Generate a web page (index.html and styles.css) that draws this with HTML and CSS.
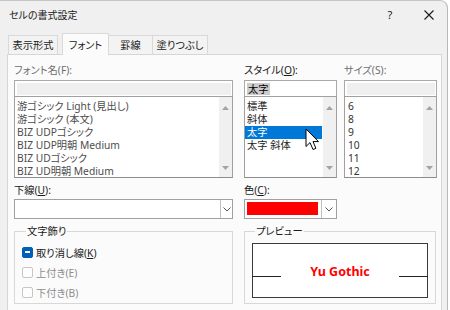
FILE: index.html
```html
<!DOCTYPE html>
<html lang="ja">
<head>
<meta charset="utf-8">
<title>セルの書式設定</title>
<link rel="stylesheet" href="styles.css">
</head>
<body>
<div class="window">
  <div class="titlebar">
    <span class="title">セルの書式設定</span>
    <span class="help">?</span>
    <svg class="close" width="10" height="10" viewBox="0 0 10 10"><path d="M0.5 0.5 L9.5 9.5 M9.5 0.5 L0.5 9.5" stroke="#1a1a1a" stroke-width="1.1" fill="none"/></svg>
  </div>
  <div class="tabs">
    <div class="tab t1">表示形式</div>
    <div class="tab active t2">フォント</div>
    <div class="tab t3">罫線</div>
    <div class="tab t4">塗りつぶし</div>
  </div>
  <div class="panel">
    <div class="top">
      <div class="col c-font">
        <div class="label dis">フォント名(F):</div>
        <div class="input"><div class="fill"></div></div>
        <div class="list">
          <div class="items font-items">
            <div class="item">游ゴシック Light (見出し)</div>
            <div class="item">游ゴシック (本文)</div>
            <div class="item">BIZ UDPゴシック</div>
            <div class="item">BIZ UDP明朝 Medium</div>
            <div class="item">BIZ UDゴシック</div>
            <div class="item">BIZ UD明朝 Medium</div>
          </div>
          <div class="scroll">
            <svg width="7" height="4" viewBox="0 0 7 4"><path d="M3.5 0 L7 4 L0 4 Z" fill="#a3a3a3"/></svg>
            <svg width="7" height="4" viewBox="0 0 7 4"><path d="M0 0 L7 0 L3.5 4 Z" fill="#a3a3a3"/></svg>
          </div>
        </div>
      </div>
      <div class="col c-style">
        <div class="label">スタイル(<u>O</u>):</div>
        <div class="input edit"><span class="sel-text">太字</span></div>
        <div class="list cursor-host">
          <div class="items">
            <div class="item">標準</div>
            <div class="item">斜体</div>
            <div class="item selected">太字</div>
            <div class="item">太字 斜体</div>
          </div>
          <div class="scroll">
            <svg width="7" height="4" viewBox="0 0 7 4"><path d="M3.5 0 L7 4 L0 4 Z" fill="#a3a3a3"/></svg>
            <svg width="7" height="4" viewBox="0 0 7 4"><path d="M0 0 L7 0 L3.5 4 Z" fill="#a3a3a3"/></svg>
          </div>
          <svg class="cursor" width="15" height="23" viewBox="0 0 15 23"><path d="M1 1 V18.5 L5 14.6 L8 21.5 L10.9 20.3 L8 13.6 H13.5 Z" fill="#fff" stroke="#000" stroke-width="1" stroke-linejoin="round"/></svg>
        </div>
      </div>
      <div class="col c-size">
        <div class="label dis">サイズ(S):</div>
        <div class="input"><div class="fill"></div></div>
        <div class="list">
          <div class="items size-items">
            <div class="item">6</div>
            <div class="item">8</div>
            <div class="item">9</div>
            <div class="item">10</div>
            <div class="item">11</div>
            <div class="item">12</div>
          </div>
          <div class="scroll">
            <svg width="7" height="4" viewBox="0 0 7 4"><path d="M3.5 0 L7 4 L0 4 Z" fill="#a3a3a3"/></svg>
            <svg width="7" height="4" viewBox="0 0 7 4"><path d="M0 0 L7 0 L3.5 4 Z" fill="#a3a3a3"/></svg>
          </div>
        </div>
      </div>
    </div>
    <div class="bottom">
      <div class="bcol left">
        <div class="label">下線(<u>U</u>):</div>
        <div class="combo wide">
          <div class="value"></div>
          <div class="drop narrow"><svg width="8" height="5" viewBox="0 0 8 5"><path d="M0.5 0.5 L4 4 L7.5 0.5" stroke="#555" stroke-width="1" fill="none"/></svg></div>
        </div>
        <fieldset class="group deco">
          <legend>文字飾り</legend>
          <div class="check"><span class="box on"></span><span>取り消し線(<u>K</u>)</span></div>
          <div class="check dis-check"><span class="box"></span><span>上付き(E)</span></div>
          <div class="check dis-check"><span class="box"></span><span>下付き(B)</span></div>
        </fieldset>
      </div>
      <div class="bcol right">
        <div class="label">色(<u>C</u>):</div>
        <div class="combo color">
          <div class="value"><div class="swatch"></div></div>
          <div class="drop"><svg width="8" height="5" viewBox="0 0 8 5"><path d="M0.5 0.5 L4 4 L7.5 0.5" stroke="#555" stroke-width="1" fill="none"/></svg></div>
        </div>
        <fieldset class="group preview">
          <legend>プレビュー</legend>
          <div class="pbox">
            <span class="pline"></span>
            <span class="ptext">Yu Gothic</span>
            <span class="pline"></span>
          </div>
        </fieldset>
      </div>
    </div>
  </div>
</div>
</body>
</html>
```

FILE: styles.css
```css
* { box-sizing: border-box; }
html, body { margin: 0; padding: 0; background: #ffffff; }
body {
  font-family: "Noto Sans", "Noto Sans CJK JP", sans-serif;
  font-size: 10.25px;
  color: #1a1a1a;
  font-feature-settings: "palt";
}
u { text-decoration: underline; text-underline-offset: 1px; }

.window {
  width: 448px;
  height: 330px;
  background: #f0f0f0;
  border-top: 1px solid #c6c6c6;
  border-right: 1px solid #b8b8b8;
  border-top-right-radius: 8px;
  overflow: hidden;
}

.titlebar {
  height: 27px;
  display: flex;
  align-items: center;
  padding-left: 9px;
}
.title { flex: 1; line-height: 14px; font-size: 10px; }
.help { width: 10px; text-align: center; font-size: 11px; margin-right: 29px; line-height: 14px; }
.close { margin-right: 13px; display: block; }

.tabs {
  height: 26px;
  display: flex;
  align-items: flex-end;
  padding-left: 8px;
}
.tab {
  height: 19px;
  border: 1px solid #d9d9d9;
  border-bottom: none;
  background: #f3f3f3;
  display: flex;
  align-items: center;
  justify-content: center;
  line-height: 14px;
}
.t1 { width: 50px; margin-right: 4px; }
.t2 { width: 47px; }
.t3 { width: 45px; margin-left: -1px; }
.t4 { width: 56px; margin-left: -1px; }
.tab.active {
  height: 22px;
  margin-bottom: -1px;
  background: #fbfbfb;
  position: relative;
  z-index: 1;
}

.panel {
  margin-left: 7px;
  width: 435px;
  height: 290px;
  background: #fbfbfb;
  border: 1px solid #d6d6d6;
  padding: 8px 4px 0 6px;
}

.top { display: flex; }
.col { display: flex; flex-direction: column; }
.c-font { width: 219px; }
.c-style { width: 93px; margin-left: 11px; }
.c-size { width: 93px; margin-left: 7px; }

.label { height: 14px; line-height: 14px; margin-bottom: 3px; white-space: nowrap; }
.label.dis { color: #6d6d6d; }

.input {
  height: 17px;
  border: 1px solid #a9a9a9;
  background: #fff;
  padding: 2px 1px 1px 2px;
}
.input .fill { height: 100%; background: #efefef; }
.input.edit { padding: 1px 2px; line-height: 13px; }
.sel-text { background: #cccccc; color: #000; display: inline-block; line-height: 12px; padding: 0 1px; margin-top: 1px; }

.list {
  margin-top: -1px;
  height: 82px;
  border: 1px solid #a0a0a0;
  border-bottom-color: #8c8c8c;
  background: #fff;
  display: flex;
}
.cursor-host { position: relative; }
.items { flex: 1; padding-top: 3px; }
.item { height: 13px; line-height: 13px; padding-left: 2px; white-space: nowrap; color: #222; }
.font-items .item { color: #4d4d4d; }
.size-items .item { color: #333; padding-left: 3px; }
.item.selected { background: #0078d7; color: #fff; margin-right: 1px; }

.scroll {
  width: 13px;
  background: #f0f0f0;
  display: flex;
  flex-direction: column;
  justify-content: space-between;
  align-items: center;
  padding: 9px 0 7px;
}
.scroll svg { display: block; }

.cursor { position: absolute; left: 60px; top: 31px; }

.bottom { display: flex; margin-top: 5px; }
.bcol { display: flex; flex-direction: column; }
.left { width: 219px; }
.right { width: 193px; margin-left: 11px; }
.bottom .label { margin-bottom: 2px; }

.combo {
  height: 20px;
  border: 1px solid #a0a0a0;
  background: #fff;
  display: flex;
}
.combo.color { width: 93px; }
.combo .value { flex: 1; padding: 2px 3px 2px 2px; }
.drop {
  width: 15px;
  border-left: 1px solid #c0c0c0;
  display: flex;
  align-items: center;
  justify-content: center;
}
.drop.narrow { width: 12px; }
.drop svg { display: block; }
.swatch { height: 13px; background: #ff0000; }

.group {
  margin: 5px 0 0;
  height: 80px;
  border: 1px solid #d8d8d8;
  min-width: 0;
}
.group legend { line-height: 14px; padding: 0 1px; }
.deco { padding: 4px 0 0 7px; }
.deco legend { margin-left: 4px; }
.preview { width: 192px; padding: 5px 7px 0 7px; }
.preview legend { margin-left: 3px; }

.check { height: 20px; display: flex; align-items: center; }
.box {
  width: 11px;
  height: 11px;
  border: 1px solid #b8b8b8;
  border-radius: 2px;
  background: #fdfdfd;
  margin-right: 3px;
  display: flex;
  align-items: center;
  justify-content: center;
}
.box.on { background: #005fb8; border-color: #005fb8; }
.box.on::after { content: ""; width: 5px; height: 1.5px; background: #fff; }
.dis-check { color: #8d8d8d; }
.dis-check .box { border-color: #c6c6c6; }

.pbox {
  height: 55px;
  border: 1px solid #3a3a3a;
  background: #fff;
  display: flex;
  align-items: flex-start;
  justify-content: space-between;
}
.pline { width: 29px; height: 1px; background: #222; margin-top: 32px; margin-left: -1px; margin-right: -1px; }
.ptext {
  font-family: "Noto Sans", sans-serif;
  font-weight: bold;
  font-size: 12.5px;
  line-height: 16px;
  color: #ff0000;
  margin-top: 20px;
}
```
